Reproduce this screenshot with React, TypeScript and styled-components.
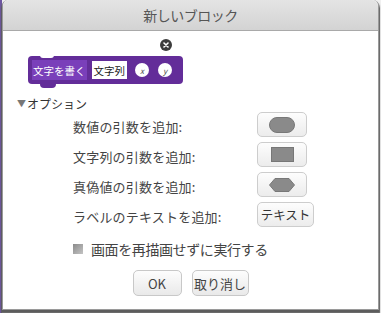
import styled, { createGlobalStyle } from 'styled-components'

// 新しいブロック ダイアログ（カスタムブロック作成）

const Global = createGlobalStyle`
  html, body { margin: 0; padding: 0; }
  body {
    font-family: "Noto Sans CJK JP", "Noto Sans", "Liberation Sans", sans-serif;
    color: #444;
  }
`

const Page = styled.div`
  width: 381px;
  height: 313px;
  overflow: hidden;
  background: linear-gradient(to right, #6d56a0 0 2px, #f0f0f0 2px);
`

const Dialog = styled.div`
  margin-left: 2px;
  width: 375px;
  height: 309px;
  background: #fff;
  border: 1px solid #9a9a9a;
  border-top: none;
  border-radius: 6px 6px 0 0;
  box-shadow: 0 2px 1px 1px #5c5c5c;
  display: flex;
  flex-direction: column;
  align-items: flex-start;
`

const TitleBar = styled.div`
  align-self: stretch;
  height: 30px;
  border-radius: 6px 6px 0 0;
  background: linear-gradient(#e4e4e4, #d3d3d3);
  border-bottom: 1px solid #a9a9a9;
  display: flex;
  align-items: center;
  justify-content: center;
  font-size: 14px;
  color: #555;
  letter-spacing: -0.5px;
`

const CloseRow = styled.div`
  height: 12px;
  margin: 8px 0 0 157px;
`

const CloseIcon = styled.div`
  width: 12px;
  height: 12px;
  border-radius: 50%;
  background: #3c3c3c;
  display: flex;
  align-items: center;
  justify-content: center;
`

const Block = styled.div`
  position: relative;
  margin: 5px 0 0 25px;
  height: 28px;
  padding: 0 11px 0 4px;
  background: #632d99;
  border-radius: 4px;
  display: flex;
  align-items: center;
  gap: 5px;
  white-space: nowrap;
  &::before {
    content: '';
    position: absolute;
    top: -1px;
    left: 12px;
    width: 14px;
    height: 3px;
    background: #fff;
    border-radius: 0 0 4px 4px;
  }
  &::after {
    content: '';
    position: absolute;
    bottom: -4px;
    left: 12px;
    width: 16px;
    height: 5px;
    background: #632d99;
    border-radius: 0 0 4px 4px;
  }
`

const BlockLabel = styled.div`
  height: 20px;
  padding: 0 1px;
  background: #7a3fba;
  color: #fff;
  font-size: 10.5px;
  display: flex;
  align-items: center;
`

const BlockInput = styled.div`
  height: 18px;
  padding: 0 2px;
  background: #fff;
  color: #222;
  font-size: 10.5px;
  display: flex;
  align-items: center;
`

const ArgOval = styled.div`
  width: 14px;
  height: 14px;
  margin-left: 3px;
  border-radius: 50%;
  background: #fff;
  color: #555;
  font-size: 8px;
  font-style: italic;
  display: flex;
  align-items: center;
  justify-content: center;
  & + & { margin-left: 4px; }
`

const OptionsHead = styled.div`
  margin: 11px 0 0 14px;
  font-size: 12px;
  color: #333;
  display: flex;
  align-items: center;
  gap: 1px;
  span:first-child { font-size: 9px; color: #777; }
`

const OptionGrid = styled.div`
  margin: 0 0 0 70px;
  display: grid;
  grid-template-columns: 184px auto;
  row-gap: 5px;
  align-items: center;
  justify-items: start;
`

const OptLabel = styled.div`
  font-size: 13px;
  color: #444;
  padding-top: 3px;
  letter-spacing: 0.2px;
`

const ShapeBtn = styled.div<{ $wide?: boolean }>`
  width: ${({ $wide }) => ($wide ? 57 : 50)}px;
  height: 25px;
  box-sizing: border-box;
  border: 1px solid #cdcdcd;
  border-radius: 5px;
  background: linear-gradient(#fdfdfd, #ececec);
  display: flex;
  align-items: center;
  justify-content: center;
  font-size: 12.5px;
  color: #333;
`

const CheckRow = styled.div`
  margin: 12px 0 0 70px;
  display: flex;
  align-items: center;
  gap: 8px;
  font-size: 14px;
  letter-spacing: -0.4px;
  color: #444;
`

const CheckBox = styled.div`
  width: 10px;
  height: 10px;
  background: linear-gradient(135deg, #8a8a8a, #c4c4c4);
`

const ButtonRow = styled.div`
  align-self: stretch;
  margin-top: 11px;
  display: flex;
  justify-content: center;
  gap: 10px;
`

const DlgBtn = styled.div<{ $w: number }>`
  width: ${({ $w }) => $w}px;
  height: 26px;
  box-sizing: border-box;
  border: 1px solid #c8c8c8;
  border-radius: 5px;
  background: linear-gradient(#fdfdfd, #e9e9e9);
  display: flex;
  align-items: center;
  justify-content: center;
  font-size: 13px;
  color: #444;
`

const Oval = () => (
  <svg width="26" height="16" viewBox="0 0 26 16">
    <rect x="0.5" y="0.5" width="25" height="15" rx="7.5" fill="#8a8a8a" stroke="#787878" />
  </svg>
)

const Rect = () => (
  <svg width="23" height="15" viewBox="0 0 23 15">
    <rect x="0.5" y="0.5" width="22" height="14" fill="#8a8a8a" stroke="#777" />
  </svg>
)

const Hexagon = () => (
  <svg width="26" height="14" viewBox="0 0 26 14">
    <polygon points="0.5,7 6,0.5 20,0.5 25.5,7 20,13.5 6,13.5" fill="#8a8a8a" stroke="#787878" />
  </svg>
)

export default function App() {
  return (
    <Page>
      <Global />
      <Dialog>
        <TitleBar>新しいブロック</TitleBar>

        <CloseRow>
          <CloseIcon>
            <svg width="6" height="6" viewBox="0 0 6 6">
              <path d="M1 1 L5 5 M5 1 L1 5" stroke="#fff" strokeWidth="1.6" strokeLinecap="round" />
            </svg>
          </CloseIcon>
        </CloseRow>

        <Block>
          <BlockLabel>文字を書く</BlockLabel>
          <BlockInput>文字列</BlockInput>
          <ArgOval>x</ArgOval>
          <ArgOval>y</ArgOval>
        </Block>

        <OptionsHead>
          <span>▼</span>
          <span>オプション</span>
        </OptionsHead>

        <OptionGrid>
          <OptLabel>数値の引数を追加:</OptLabel>
          <ShapeBtn><Oval /></ShapeBtn>
          <OptLabel>文字列の引数を追加:</OptLabel>
          <ShapeBtn><Rect /></ShapeBtn>
          <OptLabel>真偽値の引数を追加:</OptLabel>
          <ShapeBtn><Hexagon /></ShapeBtn>
          <OptLabel>ラベルのテキストを追加:</OptLabel>
          <ShapeBtn $wide>テキスト</ShapeBtn>
        </OptionGrid>

        <CheckRow>
          <CheckBox />
          画面を再描画せずに実行する
        </CheckRow>

        <ButtonRow>
          <DlgBtn $w={49}>OK</DlgBtn>
          <DlgBtn $w={57}>取り消し</DlgBtn>
        </ButtonRow>
      </Dialog>
    </Page>
  )
}
